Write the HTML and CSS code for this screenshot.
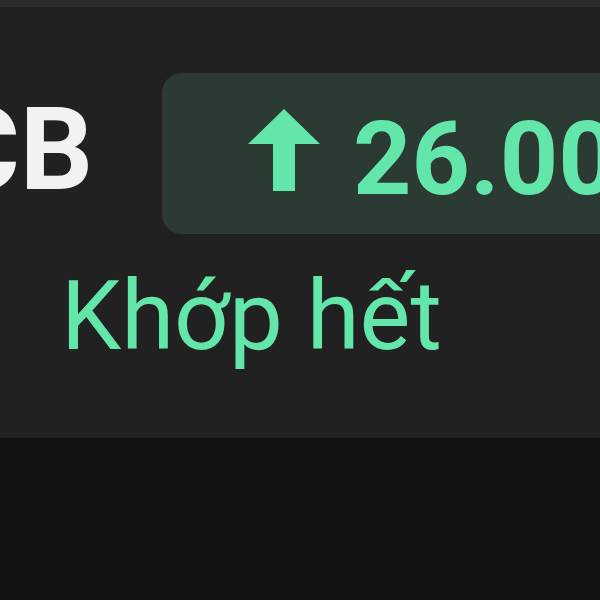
FILE: index.html
```html
<!DOCTYPE html>
<html lang="vi">
<head>
    <meta charset="UTF-8">
    <meta name="viewport" content="width=device-width, initial-scale=1.0">
    <title>Lệnh khớp</title>
    <link rel="stylesheet" href="styles.css">
</head>
<body>
    <div class="order-card">
        <div class="order-row">
            <span class="symbol">VCB</span>
            <div class="price-badge">
                <svg class="arrow-up" viewBox="0 0 72 82" width="72" height="82">
                    <path d="M36 0 L72 35 L47 35 L47 82 L25 82 L25 35 L0 35 Z" fill="#62e6aa"/>
                </svg>
                <span class="price">26.000</span>
            </div>
        </div>
        <div class="status">Khớp hết</div>
    </div>
</body>
</html>
```

FILE: styles.css
```css
body {
    margin: 0;
    background-color: #121212;
    font-family: Roboto, "Noto Sans", sans-serif;
    overflow: hidden;
    height: 600px;
}
.order-card {
    background-color: #212121;
    border-top: 7px solid #2b2b2b;
    height: 438px;
    box-sizing: border-box;
    overflow: hidden;
}
.order-row {
    display: flex;
    align-items: center;
    margin-top: 66px;
    height: 161px;
    white-space: nowrap;
}
.symbol {
    color: #f2f2f2;
    font-size: 115px;
    font-weight: 700;
    margin-left: -130px;
    margin-top: -8px;
}
.price-badge {
    display: flex;
    align-items: center;
    gap: 33px;
    margin-left: 69px;
    height: 161px;
    padding: 0 0 0 86px;
    background-color: #2c3a34;
    border-radius: 20px;
    flex-shrink: 0;
}
.arrow-up {
    display: block;
    margin-top: -8px;
}
.price {
    color: #62e6aa;
    font-size: 102px;
    font-weight: 700;
    margin-top: 10px;
}
.status {
    color: #62e6aa;
    font-size: 96px;
    margin-left: 61px;
    margin-top: 26px;
}
```
